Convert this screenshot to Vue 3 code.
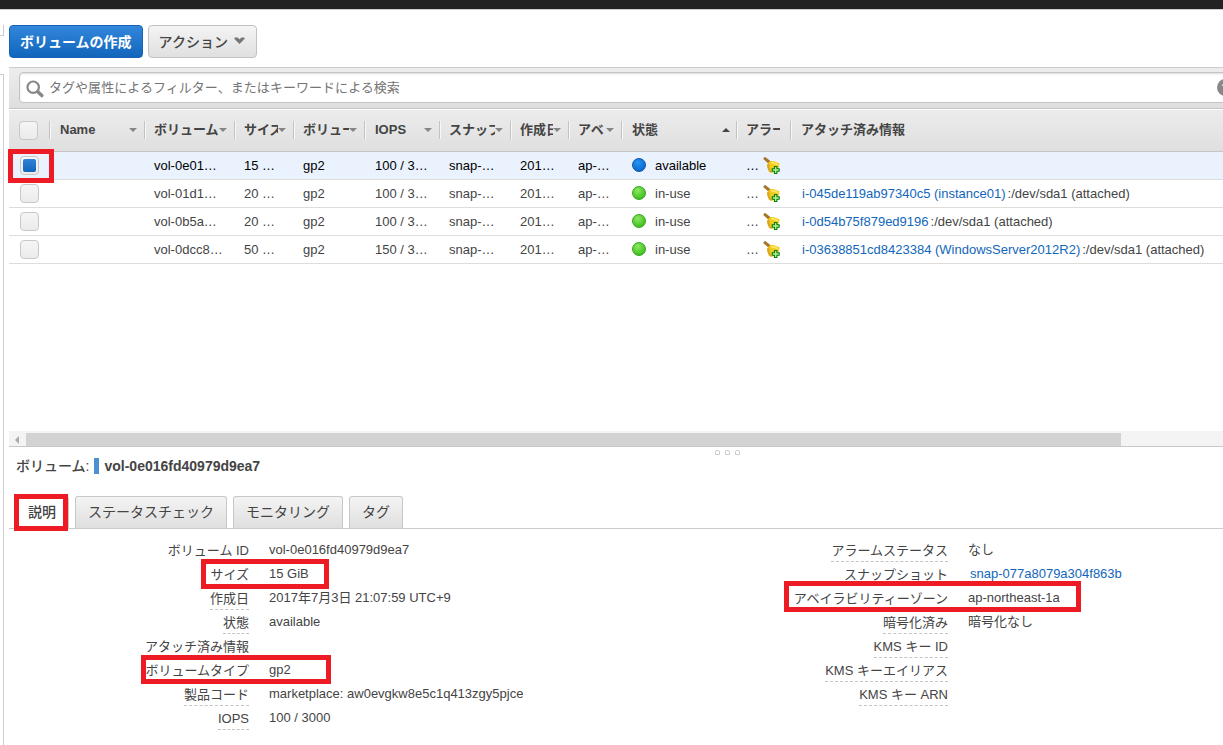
<template>
  <div class="page">
    <div class="top-bar"></div>
    <div class="layout">
      <div class="gutter">
        <div class="gutter-top"></div>
        <div class="gutter-body"></div>
      </div>
      <div class="main">
        <div class="toolbar">
          <button class="btn primary">ボリュームの作成</button>
          <button class="btn">
            アクション
            <svg width="11" height="8" viewBox="0 0 11 8">
              <path d="M0.5 0.5 H3.5 L5.5 2.2 L7.5 0.5 H10.5 V2 L5.5 7 L0.5 2 Z" fill="#777" />
            </svg>
          </button>
        </div>

        <div class="filter-bar">
          <div class="filter-input">
            <svg class="search-icon" width="18" height="18" viewBox="0 0 18 18">
              <circle cx="7.2" cy="7.2" r="5.7" fill="none" stroke="#888" stroke-width="2.2" />
              <path d="M11.8 11.8 L15.8 15.6" stroke="#888" stroke-width="3.4" stroke-linecap="round" />
            </svg>
            <span class="placeholder">タグや属性によるフィルター、またはキーワードによる検索</span>
            <span class="help">?</span>
          </div>
        </div>

        <div class="grid-row grid-header">
          <div class="cell check-cell"><span class="checkbox"></span></div>
          <div v-for="col in columns" :key="col.key" class="cell head-cell">
            <span class="head-text" :class="col.key">{{ col.title }}</span>
            <i v-if="col.arrow" class="arrow" :class="col.arrow"></i>
          </div>
        </div>

        <div class="grid-body">
          <div v-for="row in rows" :key="row.id" class="grid-row body-row" :class="{ selected: row.selected }">
            <div class="cell check-cell">
              <span class="checkbox"><i v-if="row.selected"></i></span>
            </div>
            <div class="cell"></div>
            <div class="cell">{{ row.id }}</div>
            <div class="cell">{{ row.size }}</div>
            <div class="cell">gp2</div>
            <div class="cell">{{ row.iops }}</div>
            <div class="cell">snap-…</div>
            <div class="cell">201…</div>
            <div class="cell">ap-…</div>
            <div class="cell"><span class="dot" :class="row.state"></span>{{ row.state }}</div>
            <div class="cell alarm">
              <span>…</span>
              <svg width="17" height="17" viewBox="0 0 17 17">
                <path d="M2 1.6 L6 5" stroke="#a5762a" stroke-width="3" stroke-linecap="round" />
                <path d="M4 8 Q4.8 5.4 7.2 4.2 Q10 3.4 12.6 4.8 L16.4 6.2 Q17 9 14.6 12 Q12 15.4 8.4 16 L6 14.6 Q4.2 11 4 8 Z" fill="#f3cb1c" />
                <path d="M4 8 Q4.2 11 6 14.6 L8.4 16 L6.8 11 L6 6 Z" fill="#d9a522" />
                <path d="M8.4 5.6 L12.6 6.6 L15 7.8" fill="none" stroke="#ffe863" stroke-width="1.6" />
                <path d="M11.5 9.5h2.4v2.3h2.3v2.4h-2.3v2.3h-2.4v-2.3H9.2v-2.4h2.3Z" fill="#b5f59c" stroke="#087c09" stroke-width="1.1" />
              </svg>
            </div>
            <div class="cell attach"><a v-if="row.instance">{{ row.instance }}</a>{{ row.device }}</div>
          </div>
        </div>

        <div class="scrollbar">
          <i class="scroll-left"></i>
          <div class="thumb"></div>
        </div>

        <div class="splitter"><i></i><i></i><i></i></div>
        <div class="detail-title">ボリューム:<i></i><b>vol-0e016fd40979d9ea7</b></div>

        <div class="tabs">
          <div class="tab active">説明</div>
          <div class="tab">ステータスチェック</div>
          <div class="tab">モニタリング</div>
          <div class="tab">タグ</div>
        </div>

        <div class="details">
          <div v-for="(list, i) in details" :key="i" class="detail-col">
            <div v-for="item in list" :key="item.label" class="detail-row">
              <div class="label"><span :class="{ hint: item.hint }">{{ item.label }}</span></div>
              <div class="value" :class="{ link: item.link }">{{ item.value }}</div>
            </div>
          </div>
        </div>
      </div>
    </div>

    <div v-for="name in marks" :key="name" class="mark" :class="name"></div>
  </div>
</template>

<script setup>
const columns = [
  { key: 'name', title: 'Name', arrow: 'down' },
  { key: 'volume', title: 'ボリューム', arrow: 'down' },
  { key: 'size', title: 'サイズ', arrow: 'down' },
  { key: 'type', title: 'ボリュー', arrow: 'down' },
  { key: 'iops', title: 'IOPS', arrow: 'down' },
  { key: 'snapshot', title: 'スナップ', arrow: 'down' },
  { key: 'created', title: '作成日', arrow: 'down' },
  { key: 'zone', title: 'アベ', arrow: 'down' },
  { key: 'state', title: '状態', arrow: 'up' },
  { key: 'alarm-head', title: 'アラー' },
  { key: 'attached', title: 'アタッチ済み情報' }
]

const rows = [
  { id: 'vol-0e01…', size: '15 …', iops: '100 / 3…', state: 'available', selected: true },
  { id: 'vol-01d1…', size: '20 …', iops: '100 / 3…', state: 'in-use', instance: 'i-045de119ab97340c5 (instance01)', device: ':/dev/sda1 (attached)' },
  { id: 'vol-0b5a…', size: '20 …', iops: '100 / 3…', state: 'in-use', instance: 'i-0d54b75f879ed9196', device: ':/dev/sda1 (attached)' },
  { id: 'vol-0dcc8…', size: '50 …', iops: '150 / 3…', state: 'in-use', instance: 'i-03638851cd8423384 (WindowsServer2012R2)', device: ':/dev/sda1 (attached)' }
]

const details = [
  [
    { label: 'ボリューム ID', value: 'vol-0e016fd40979d9ea7' },
    { label: 'サイズ', value: '15 GiB', hint: true },
    { label: '作成日', value: '2017年7月3日 21:07:59 UTC+9', hint: true },
    { label: '状態', value: 'available', hint: true },
    { label: 'アタッチ済み情報', value: '' },
    { label: 'ボリュームタイプ', value: 'gp2', hint: true },
    { label: '製品コード', value: 'marketplace: aw0evgkw8e5c1q413zgy5pjce', hint: true },
    { label: 'IOPS', value: '100 / 3000', hint: true }
  ],
  [
    { label: 'アラームステータス', value: 'なし', hint: true },
    { label: 'スナップショット', value: 'snap-077a8079a304f863b', hint: true, link: true },
    { label: 'アベイラビリティーゾーン', value: 'ap-northeast-1a', hint: true },
    { label: '暗号化済み', value: '暗号化なし', hint: true },
    { label: 'KMS キー ID', value: '', hint: true },
    { label: 'KMS キーエイリアス', value: '', hint: true },
    { label: 'KMS キー ARN', value: '', hint: true }
  ]
]

const marks = ['mark-check', 'mark-tab', 'mark-size', 'mark-type', 'mark-zone']
</script>

<style>
body {
  margin: 0;
  overflow: hidden;
}
</style>

<style scoped>
.page {
  position: relative;
  width: 1223px;
  height: 745px;
  overflow: hidden;
  background: #fff;
  color: #444;
  font-family: "Liberation Sans", "Noto Sans CJK JP", sans-serif;
  font-size: 13px;
}

.page * {
  box-sizing: border-box;
}

.top-bar {
  height: 10px;
  background: #222;
  border-bottom: 1px solid #ccc;
}

.layout {
  display: flex;
  height: 735px;
}

.gutter {
  width: 9px;
  flex-shrink: 0;
  padding-top: 15px;
}

.gutter-top {
  width: 4px;
  height: 11px;
  border-right: 1px solid #ccc;
  border-bottom: 1px solid #ccc;
}

.gutter-body {
  width: 4px;
  height: 680px;
  margin-top: 38px;
  border-right: 1px solid #ccc;
  border-top: 1px solid #ccc;
}

.main {
  width: 1214px;
  overflow: hidden;
}

.toolbar {
  display: flex;
  gap: 5px;
  height: 57px;
  padding-top: 15px;
}

.btn {
  display: flex;
  align-items: center;
  gap: 6px;
  height: 33px;
  padding: 0 11px 2px 10px;
  border: 1px solid #c2c2c2;
  border-radius: 4px;
  background: linear-gradient(#f4f4f4, #e0e0e0);
  color: #444;
  font: 500 14px/20px "Noto Sans CJK JP", sans-serif;
  white-space: nowrap;
}

.btn.primary {
  padding: 0 10px 2px;
  border-color: #1763b4;
  background: linear-gradient(#3287dd, #1166bb);
  color: #fff;
  font-weight: 700;
}

.filter-bar {
  height: 42px;
  padding: 4px 0 0 10px;
  border-top: 1px solid #ccc;
  border-bottom: 1px solid #c6c6c6;
  background: linear-gradient(#ededed, #dedede);
}

.filter-input {
  display: flex;
  align-items: center;
  height: 31px;
  width: 1224px;
  padding: 0 8px 0 6px;
  border: 1px solid #c4c4c4;
  border-radius: 4px 0 0 4px;
  background: #fff;
  box-shadow: inset 0 1px 2px #ddd;
  color: #757575;
  font-family: "Noto Sans CJK JP", sans-serif;
  line-height: 20px;
}

.search-icon {
  flex-shrink: 0;
  margin: 2px 5px 0 0;
}

.placeholder {
  flex-shrink: 0;
  margin-top: -2px;
  letter-spacing: 0.04px;
  white-space: nowrap;
}

.help {
  flex-shrink: 0;
  width: 17px;
  height: 17px;
  margin-left: auto;
  border-radius: 50%;
  background: #888;
  color: #fff;
  font: bold 13px/17px "Liberation Sans", sans-serif;
  text-align: center;
}

.grid-row {
  display: grid;
  grid-template-columns: 40px 95px 90px 59px 71px 75px 71px 58px 53px 115px 54px 1fr;
}

.grid-header {
  height: 43px;
  border-top: 1px solid #fff;
  border-bottom: 1px solid #c6c6c6;
  background: linear-gradient(#ececec, #dfdfdf);
}

.cell {
  display: flex;
  align-items: center;
  min-width: 0;
  padding-left: 10px;
  white-space: nowrap;
}

.head-cell {
  height: 18px;
  margin-top: 11px;
  padding: 0 8px 0 9px;
  border-left: 1px solid #c3c3c3;
  box-shadow: inset 1px 0 #f7f7f7;
  font-weight: 700;
  line-height: 18px;
}

.head-text {
  flex: 1;
  overflow: hidden;
}

.name,
.iops {
  padding-left: 1px;
}

.alarm-head {
  margin-right: 2px;
}

.state {
  padding-left: 1px;
}

.head-cell:last-child {
  padding-left: 10px;
}

.arrow {
  flex-shrink: 0;
  width: 0;
  height: 0;
  margin-right: -1px;
  border: 4px solid transparent;
}

.arrow.down {
  margin-top: 4px;
  border-top-color: #858585;
}

.arrow.up {
  margin-top: -4px;
  margin-right: -2px;
  border-bottom-color: #444;
}

.checkbox {
  display: flex;
  align-items: center;
  justify-content: center;
  width: 19px;
  height: 19px;
  border: 1px solid #c8c8c8;
  border-radius: 4px;
  background: linear-gradient(#f5f5f5, #ebebeb);
}

.checkbox i {
  width: 13px;
  height: 13px;
  border-radius: 2px;
  background: linear-gradient(#3083d6, #1165bd);
}

.grid-body {
  height: 279px;
}

.body-row {
  height: 28px;
  border-bottom: 1px solid #ddd;
}

.body-row .cell {
  padding-bottom: 1px;
}

.body-row .cell:nth-child(6) {
  padding-left: 11px;
}

.body-row .check-cell {
  padding-bottom: 0;
  padding-left: 11px;
}

.body-row.selected {
  background: #eaf2fe;
  color: #000;
}

.body-row .attach {
  padding-left: 12px;
}

.attach a {
  margin-right: 2px;
}

.attach a,
.value.link {
  color: #1166bb;
}

.value.link {
  padding-left: 2px;
}

.dot {
  width: 14px;
  height: 14px;
  margin-right: 9px;
  border-radius: 50%;
}

.body-row .cell:nth-child(10) {
  padding-left: 11px;
}

.dot.available {
  border: 1px solid #0a55a9;
  background: radial-gradient(circle at 40% 30%, #2495f5, #0866cb 80%);
}

.dot.in-use {
  border: 1px solid #35a51c;
  background: radial-gradient(circle at 40% 30%, #8cea60, #3cbb1c 80%);
}

.alarm {
  gap: 4px;
}

.scrollbar {
  display: flex;
  align-items: center;
  height: 16px;
  padding-top: 2px;
  border-bottom: 1px solid #c8c8c8;
  background: #f4f4f4;
}

.scroll-left {
  width: 17px;
  height: 8px;
}

.scroll-left::before {
  content: "";
  display: block;
  width: 0;
  margin-left: 2px;
  border: 4px solid transparent;
  border-right-color: #aaa;
}

.thumb {
  width: 1095px;
  height: 13px;
  background: #d3d3d3;
}

.splitter {
  display: flex;
  gap: 5px;
  height: 9px;
  padding: 3px 0 0 706px;
}

.splitter i {
  width: 5px;
  height: 5px;
  border: 1px solid #ccc;
  border-radius: 2px 2px 0 0;
}

.detail-title {
  display: flex;
  align-items: center;
  height: 20px;
  padding-left: 7px;
  font-size: 14px;
  font-weight: 500;
  line-height: 20px;
}

.detail-title i {
  width: 5px;
  height: 16px;
  margin: 0 5px;
  background: #4e91d2;
}

.tabs {
  display: flex;
  gap: 6px;
  height: 53px;
  padding: 20px 0 0 6px;
  border-bottom: 1px solid #ccc;
}

.tab {
  height: 32px;
  padding: 0 12px;
  border: 1px solid #c8c8c8;
  border-bottom: none;
  border-radius: 3px 3px 0 0;
  background: linear-gradient(#f4f4f4, #dfdfdf);
  font: 14px/28px "Noto Sans CJK JP", sans-serif;
}

.tab.active {
  height: 33px;
  background: #fff;
  font-weight: 500;
}

.details {
  display: flex;
  padding-top: 9px;
}

.detail-col {
  width: 699px;
  flex-shrink: 0;
}

.detail-row {
  display: flex;
  height: 24px;
  line-height: 24px;
}

.label {
  width: 240px;
  height: 24px;
  text-align: right;
  white-space: nowrap;
}

.label span {
  display: inline-block;
  height: 24px;
  padding-top: 1px;
}

.label .hint {
  border-bottom: 1px dashed #c4c4c4;
}

.value {
  margin-left: 20px;
  white-space: nowrap;
}

/* highlight frames laid over the console */
.mark {
  position: absolute;
  border: 5px solid #ed1c24;
}

.mark-check {
  left: 8px;
  top: 149px;
  width: 46px;
  height: 34px;
}

.mark-tab {
  left: 14px;
  top: 494px;
  width: 54px;
  height: 37px;
}

.mark-size {
  left: 201px;
  top: 559px;
  width: 128px;
  height: 30px;
}

.mark-type {
  left: 141px;
  top: 655px;
  width: 190px;
  height: 29px;
}

.mark-zone {
  left: 784px;
  top: 581px;
  width: 297px;
  height: 31px;
}
</style>
